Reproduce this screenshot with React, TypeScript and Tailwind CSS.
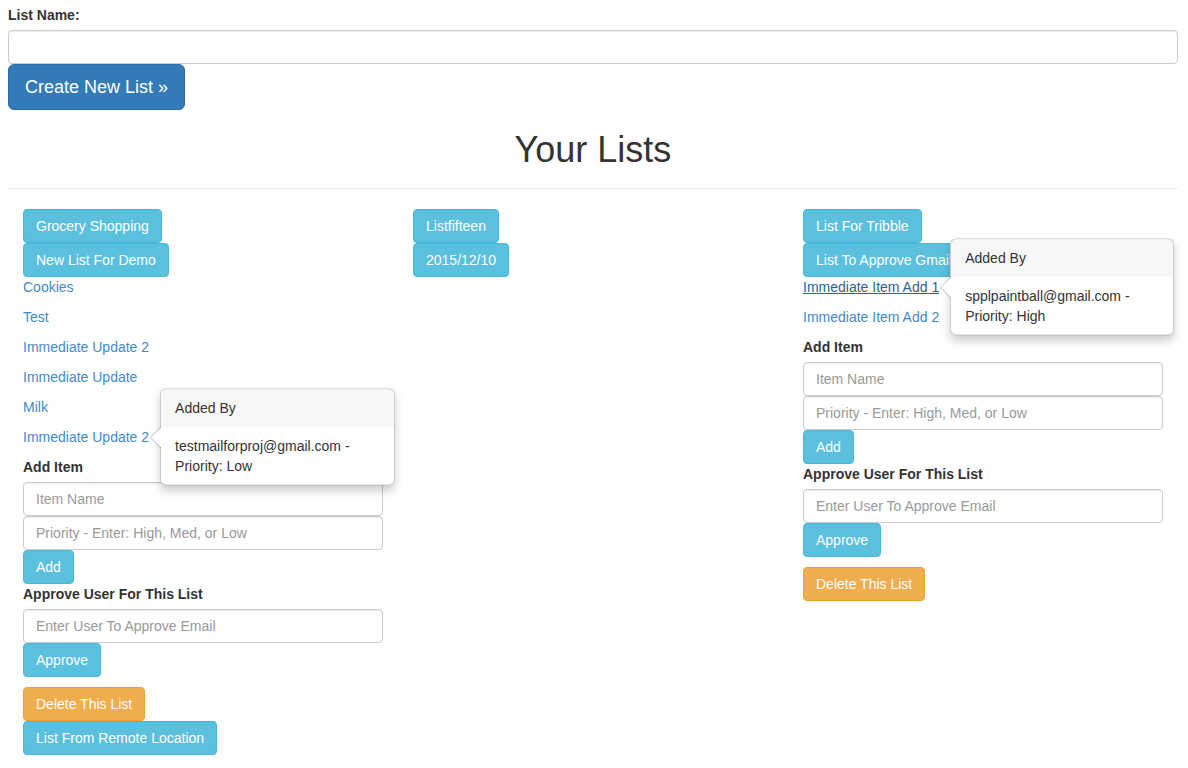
import type { ReactNode } from "react";

type Item = {
  name: string;
  hover?: boolean;
  popover?: { email: string; priority: string; width: string };
};

function InfoButton({ children }: { children: ReactNode }) {
  return (
    <div>
      <button className="h-[34px] px-3 rounded border border-[#46b8da] bg-[#5bc0de] text-white text-sm leading-5 whitespace-nowrap">
        {children}
      </button>
    </div>
  );
}

function Popover({ email, priority, width }: { email: string; priority: string; width: string }) {
  return (
    <div
      className={`absolute left-full top-1/2 -translate-y-1/2 ml-[11px] z-10 bg-white border border-black/20 rounded-md shadow-[0_5px_10px_rgba(0,0,0,0.2)] text-[#333] text-sm leading-5 whitespace-nowrap ${width}`}
    >
      {/* arrow */}
      <div className="absolute -left-[11px] top-1/2 -translate-y-1/2 w-0 h-0 border-y-[11px] border-y-transparent border-r-[11px] border-r-black/25" />
      <div className="absolute -left-[10px] top-1/2 -translate-y-1/2 w-0 h-0 border-y-[10px] border-y-transparent border-r-[10px] border-r-white" />
      <div className="px-[14px] py-2 bg-[#f7f7f7] border-b border-[#ebebeb] rounded-t-md">Added By</div>
      <div className="px-[14px] py-[9px]">
        {email} -<br />
        Priority: {priority}
      </div>
    </div>
  );
}

function ItemLink({ item }: { item: Item }) {
  return (
    <p className="mb-[10px] leading-5">
      <span className="relative inline-block">
        <a
          href="#"
          className={
            item.hover
              ? "text-[#2a6496] underline decoration-[#2a6496]"
              : "text-[#428bca]"
          }
        >
          {item.name}
        </a>
        {item.popover && <Popover {...item.popover} />}
      </span>
    </p>
  );
}

function TextInput({ placeholder }: { placeholder: string }) {
  return (
    <input
      className="block w-full h-[34px] px-3 border border-[#ccc] rounded text-sm text-[#555] placeholder:text-[#999] shadow-[inset_0_1px_1px_rgba(0,0,0,0.075)]"
      placeholder={placeholder}
    />
  );
}

function ListForm() {
  return (
    <div>
      <label className="block font-bold mb-[5px] leading-5">Add Item</label>
      <TextInput placeholder="Item Name" />
      <TextInput placeholder="Priority - Enter: High, Med, or Low" />
      <InfoButton>Add</InfoButton>
      <label className="block font-bold mb-[5px] leading-5">Approve User For This List</label>
      <TextInput placeholder="Enter User To Approve Email" />
      <InfoButton>Approve</InfoButton>
      <div className="mt-[10px]">
        <button className="h-[34px] px-3 rounded border border-[#eea236] bg-[#f0ad4e] text-white text-sm leading-5">
          Delete This List
        </button>
      </div>
    </div>
  );
}

const columns: { lists: string[]; items: Item[]; form: boolean; after?: string[] }[] = [
  {
    lists: ["Grocery Shopping", "New List For Demo"],
    items: [
      { name: "Cookies" },
      { name: "Test" },
      { name: "Immediate Update 2" },
      { name: "Immediate Update" },
      { name: "Milk" },
      {
        name: "Immediate Update 2",
        popover: { email: "testmailforproj@gmail.com", priority: "Low", width: "w-[235px]" },
      },
    ],
    form: true,
    after: ["List From Remote Location"],
  },
  {
    lists: ["Listfifteen", "2015/12/10"],
    items: [],
    form: false,
  },
  {
    lists: ["List For Tribble", "List To Approve Gmail"],
    items: [
      {
        name: "Immediate Item Add 1",
        hover: true,
        popover: { email: "spplpaintball@gmail.com", priority: "High", width: "w-[224px]" },
      },
      { name: "Immediate Item Add 2" },
    ],
    form: true,
  },
];

export default function App() {
  return (
    <div className="min-h-screen bg-white text-[#333] text-sm font-['Liberation_Sans',Arial,sans-serif]">
      <div className="w-[1170px] ml-2">
        {/* New list form */}
        <label className="block font-bold leading-5 pt-[5px] mb-[5px]">List Name:</label>
        <input className="block w-full h-[34px] px-3 border border-[#ccc] rounded shadow-[inset_0_1px_1px_rgba(0,0,0,0.075)]" />
        <button className="h-[46px] px-4 rounded-md border border-[#2e6da4] bg-[#337ab7] text-white text-lg leading-[24px]">
          Create New List »
        </button>

        <h1 className="mt-5 mb-0 text-center text-[36px] leading-[40px] font-medium">Your Lists</h1>
        <hr className="mt-[18px] mb-5 border-t border-[#eee]" />

        {/* Lists */}
        <div className="grid grid-cols-3">
          {columns.map((col, i) => (
            <div key={i} className="px-[15px]">
              {col.lists.map((name) => (
                <InfoButton key={name}>{name}</InfoButton>
              ))}
              {col.items.map((item, j) => (
                <ItemLink key={j} item={item} />
              ))}
              {col.form && <ListForm />}
              {col.after?.map((name) => (
                <InfoButton key={name}>{name}</InfoButton>
              ))}
            </div>
          ))}
        </div>
      </div>
    </div>
  );
}
